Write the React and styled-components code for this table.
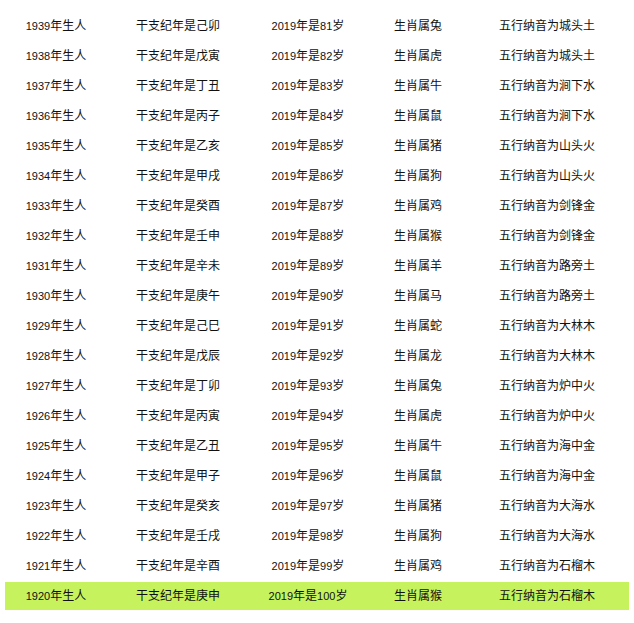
import React from "react";
import styled, { createGlobalStyle } from "styled-components";

const GlobalStyle = createGlobalStyle`
  body {
    margin: 0;
    background: #fff;
    font-family: "Liberation Sans", "Noto Sans CJK SC", sans-serif;
  }
`;

const GANZHI = ["己卯", "戊寅", "丁丑", "丙子", "乙亥", "甲戌", "癸酉", "壬申", "辛未", "庚午",
  "己巳", "戊辰", "丁卯", "丙寅", "乙丑", "甲子", "癸亥", "壬戌", "辛酉", "庚申"];
const ZODIAC = ["兔", "虎", "牛", "鼠", "猪", "狗", "鸡", "猴", "羊", "马",
  "蛇", "龙", "兔", "虎", "牛", "鼠", "猪", "狗", "鸡", "猴"];
const NAYIN = ["城头土", "涧下水", "山头火", "剑锋金", "路旁土", "大林木", "炉中火", "海中金", "大海水", "石榴木"];

const rows = GANZHI.map((gz, i) => ({
  year: 1939 - i,
  ganzhi: gz,
  age: 81 + i,
  zodiac: ZODIAC[i],
  nayin: NAYIN[Math.floor(i / 2)],
}));

export default function App() {
  return (
    <React.Fragment>
      <GlobalStyle />
      <Table>
        {rows.map((r) => (
          <Row key={r.year} $active={r.year === 1920}>
            <Cell><Num>{r.year}</Num>年生人</Cell>
            <Cell>干支纪年是{r.ganzhi}</Cell>
            <Cell><Num>2019</Num>年是<Num>{r.age}</Num>岁</Cell>
            <Cell>生肖属{r.zodiac}</Cell>
            <Cell>五行纳音为{r.nayin}</Cell>
          </Row>
        ))}
      </Table>
    </React.Fragment>
  );
}

const Table = styled.div`
  display: flex;
  flex-direction: column;
  gap: 2px;
  width: 624px;
  padding: 12px 5px 12px 5px;
`;

const Row = styled.div`
  display: grid;
  grid-template-columns: 102px 142px 118px 102px 156px;
  height: 28px;
  align-items: center;
  background: ${(p) => (p.$active ? "#c6f35d" : "transparent")};
`;

const Cell = styled.div`
  text-align: center;
  font-size: 12px;
  line-height: 27px;
  padding-top: 1px;
  color: #111;
  white-space: nowrap;
`;

const Num = styled.span`
  font-size: 11px;
`;
